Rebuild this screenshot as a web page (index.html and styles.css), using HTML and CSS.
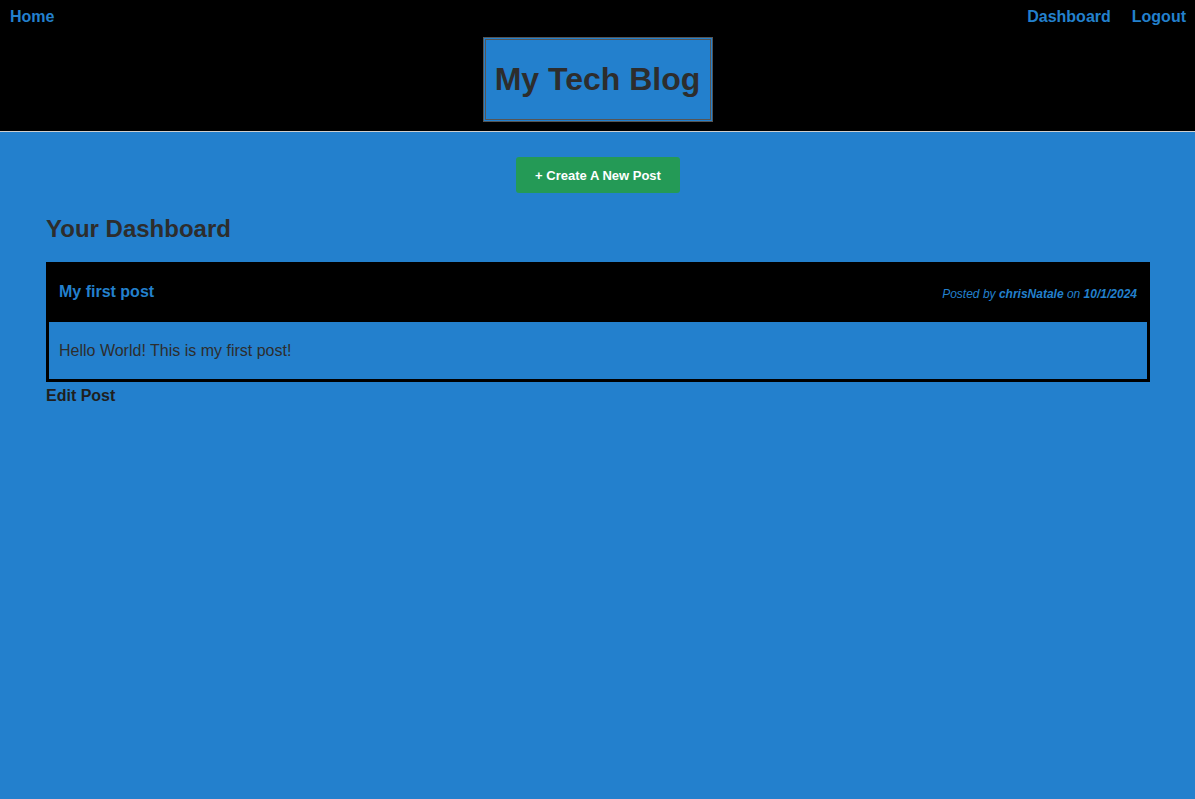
FILE: index.html
```html
<!DOCTYPE html>
<html lang="en">
<head>
<meta charset="utf-8">
<title>My Tech Blog</title>
<link rel="stylesheet" href="styles.css">
</head>
<body>
<header class="site-header">
  <nav class="nav">
    <a class="nav-link" href="#">Home</a>
    <div class="nav-right">
      <a class="nav-link" href="#">Dashboard</a>
      <a class="nav-link" href="#">Logout</a>
    </div>
  </nav>
  <div class="title-wrap">
    <h1 class="site-title">My Tech Blog</h1>
  </div>
</header>
<main class="main">
  <div class="btn-row">
    <button class="btn-create">+ Create A New Post</button>
  </div>
  <h2 class="dash-title">Your Dashboard</h2>
  <article class="post">
    <div class="post-head">
      <h3 class="post-title">My first post</h3>
      <p class="post-meta">Posted by <b>chrisNatale</b> on <b>10/1/2024</b></p>
    </div>
    <div class="post-body">Hello World! This is my first post!</div>
  </article>
  <a class="edit-link" href="#">Edit Post</a>
</main>
</body>
</html>
```

FILE: styles.css
```css
* { box-sizing: border-box; }
html, body { height: 100%; }
body {
  margin: 0;
  background: #2380cd;
  font-family: "Liberation Sans", Arial, sans-serif;
  color: #2d2d2d;
}
.site-header {
  background: #000;
  border-bottom: 1px solid #cfcfcf;
  height: 132px;
}
.nav {
  display: flex;
  justify-content: space-between;
  align-items: center;
  height: 33px;
  padding: 0 9px 0 10px;
}
.nav-right { display: flex; gap: 21px; }
.nav-link {
  color: #2380cd;
  font-weight: bold;
  font-size: 16px;
  text-decoration: none;
}
.title-wrap { display: flex; justify-content: center; padding-top: 4px; }
.site-title {
  margin: 0;
  width: 230px;
  height: 85px;
  display: flex;
  align-items: center;
  justify-content: center;
  background: #2380cd;
  border: 3px double #555;
  font-size: 32px;
  font-weight: bold;
  color: #2d2d2d;
}
.main { padding: 25px 45px 0 46px; }
.btn-row { display: flex; justify-content: center; }
.btn-create {
  width: 164px;
  height: 36px;
  background: #249a56;
  color: #fff;
  border: none;
  border-radius: 3px;
  font-family: "Liberation Sans", Arial, sans-serif;
  font-weight: bold;
  font-size: 13px;
  padding: 0;
}
.dash-title {
  margin: 21px 0 18px;
  font-size: 24px;
  line-height: 30px;
  font-weight: bold;
  color: #2d2d2d;
}
.post { border: 3px solid #000; }
.post-head {
  background: #000;
  display: flex;
  justify-content: space-between;
  align-items: center;
  height: 57px;
  padding: 0 10px;
}
.post-title {
  margin: 0 0 4px;
  font-size: 16px;
  font-weight: bold;
  color: #2380cd;
}
.post-meta {
  margin: 0;
  font-size: 12px;
  font-style: italic;
  color: #2380cd;
}
.post-body {
  height: 57px;
  display: flex;
  align-items: center;
  padding: 0 10px;
  font-size: 16px;
  color: #2d2d2d;
}
.edit-link {
  display: inline-block;
  margin-top: 5px;
  font-size: 16px;
  font-weight: bold;
  color: #1f1f1f;
  text-decoration: none;
}
```
